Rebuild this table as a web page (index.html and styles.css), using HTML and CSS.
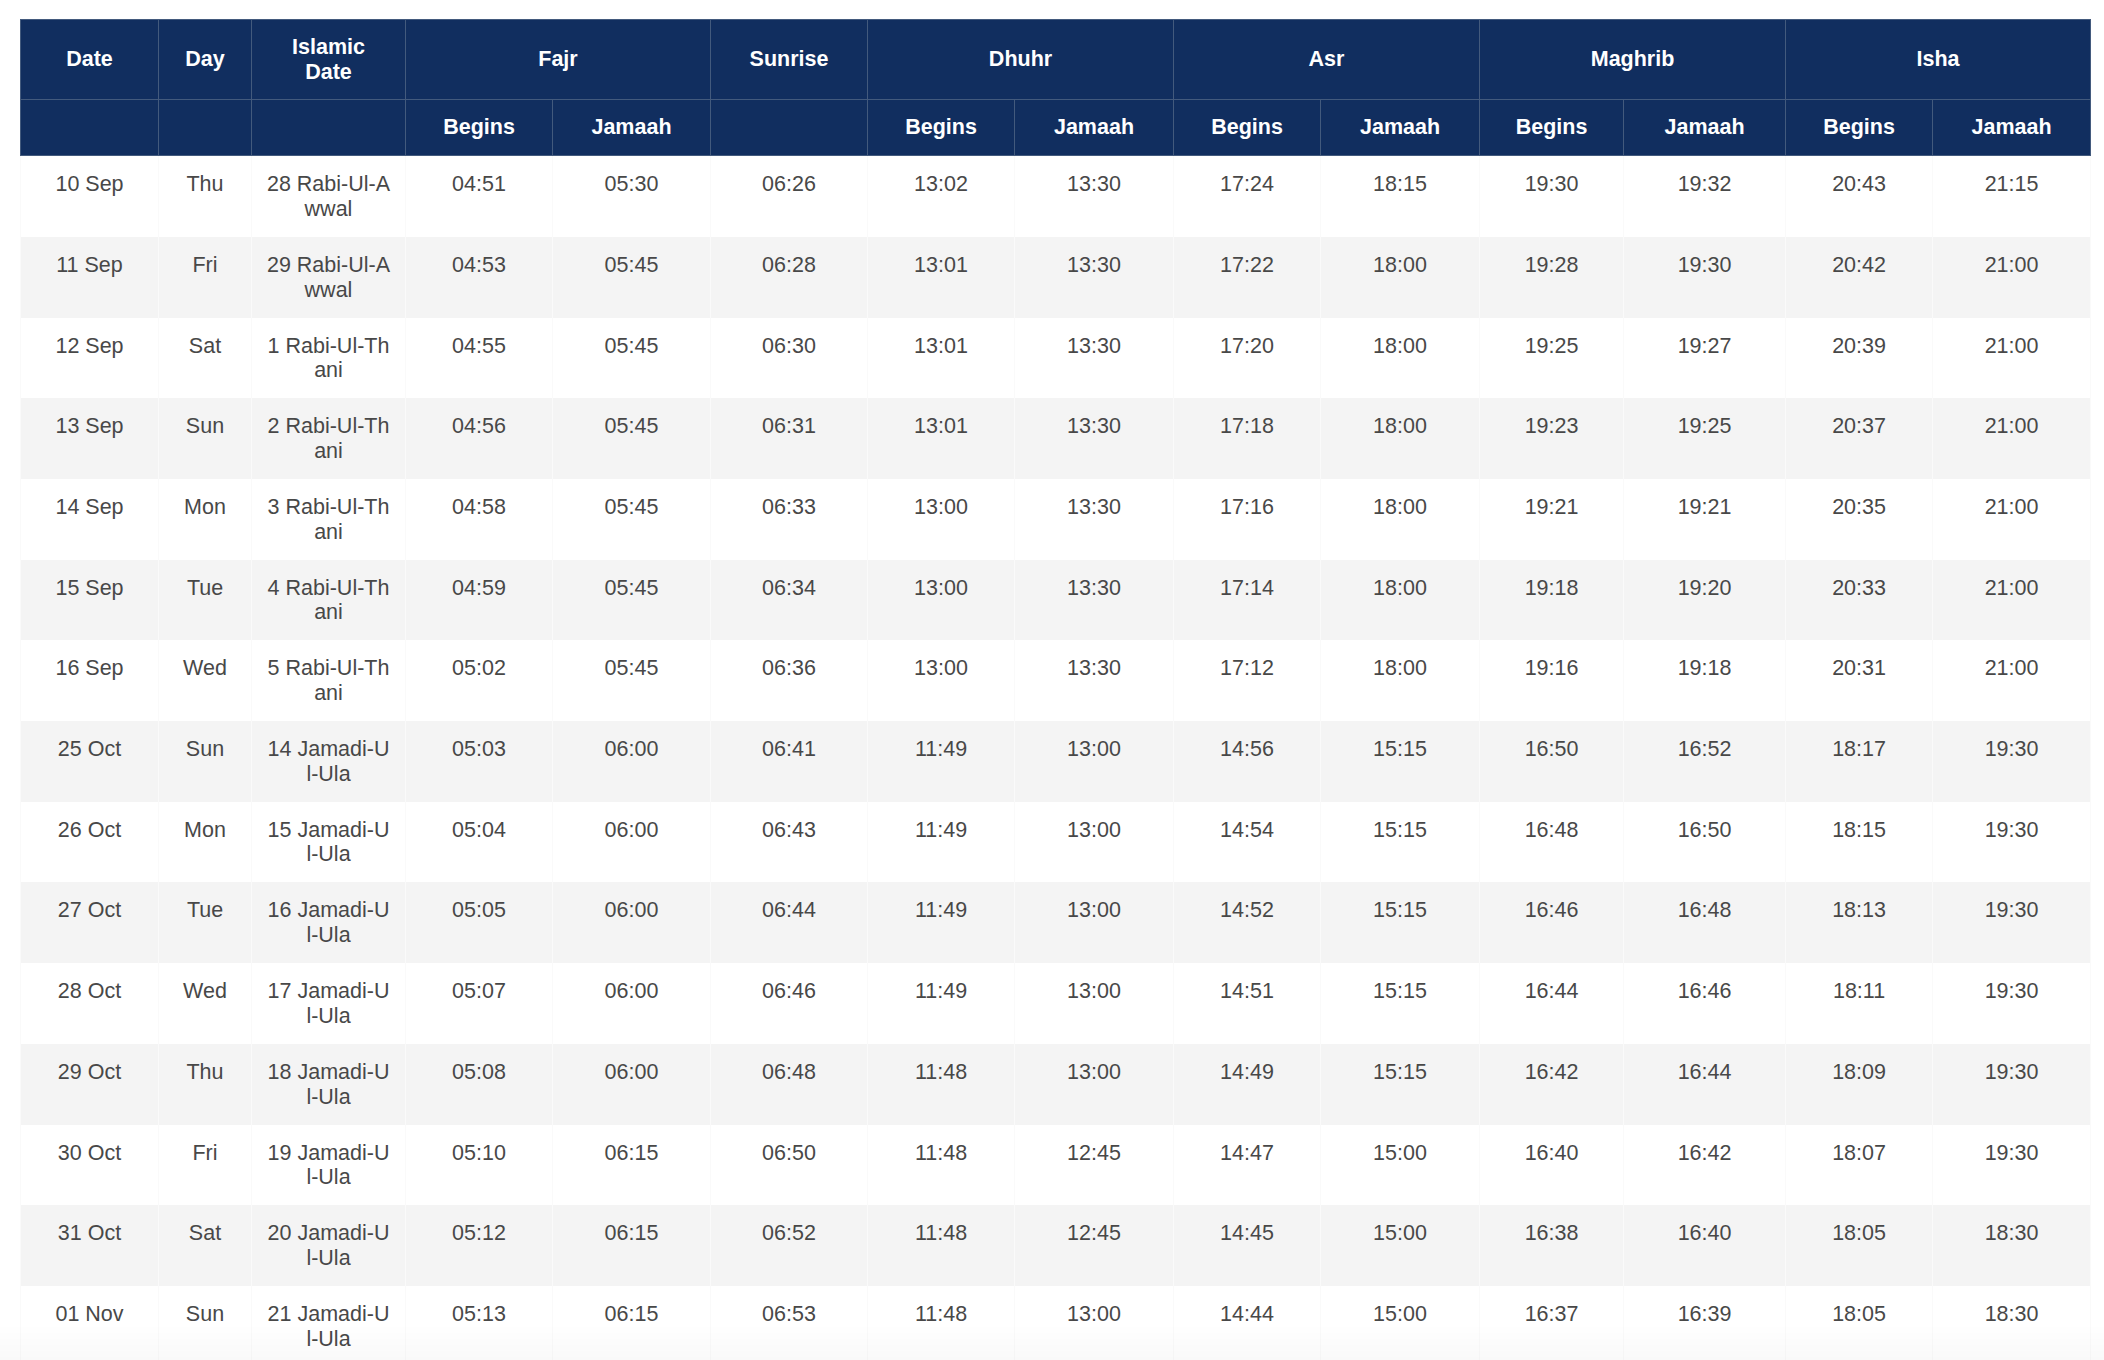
FILE: index.html
```html
<!DOCTYPE html>
<html lang="en">
<head>
<meta charset="utf-8">
<title>Prayer Timetable</title>
<link rel="stylesheet" href="styles.css">
</head>
<body>
<table class="timetable">
  <colgroup>
    <col class="c-date"><col class="c-day"><col class="c-islamic">
    <col class="c-fb"><col class="c-fj"><col class="c-sun">
    <col class="c-db"><col class="c-dj"><col class="c-ab"><col class="c-aj">
    <col class="c-mb"><col class="c-mj"><col class="c-ib"><col class="c-ij">
  </colgroup>
  <thead>
    <tr class="head-main">
      <th>Date</th><th>Day</th><th>Islamic<br>Date</th>
      <th colspan="2">Fajr</th><th>Sunrise</th><th colspan="2">Dhuhr</th>
      <th colspan="2">Asr</th><th colspan="2">Maghrib</th><th colspan="2">Isha</th>
    </tr>
    <tr class="head-sub">
      <th></th><th></th><th></th>
      <th>Begins</th><th>Jamaah</th><th></th>
      <th>Begins</th><th>Jamaah</th><th>Begins</th><th>Jamaah</th>
      <th>Begins</th><th>Jamaah</th><th>Begins</th><th>Jamaah</th>
    </tr>
  </thead>
  <tbody>
    <tr><td>10 Sep</td><td>Thu</td><td class="islamic">28 Rabi-Ul-Awwal</td><td>04:51</td><td>05:30</td><td>06:26</td><td>13:02</td><td>13:30</td><td>17:24</td><td>18:15</td><td>19:30</td><td>19:32</td><td>20:43</td><td>21:15</td></tr>
    <tr><td>11 Sep</td><td>Fri</td><td class="islamic">29 Rabi-Ul-Awwal</td><td>04:53</td><td>05:45</td><td>06:28</td><td>13:01</td><td>13:30</td><td>17:22</td><td>18:00</td><td>19:28</td><td>19:30</td><td>20:42</td><td>21:00</td></tr>
    <tr><td>12 Sep</td><td>Sat</td><td class="islamic">1 Rabi-Ul-Thani</td><td>04:55</td><td>05:45</td><td>06:30</td><td>13:01</td><td>13:30</td><td>17:20</td><td>18:00</td><td>19:25</td><td>19:27</td><td>20:39</td><td>21:00</td></tr>
    <tr><td>13 Sep</td><td>Sun</td><td class="islamic">2 Rabi-Ul-Thani</td><td>04:56</td><td>05:45</td><td>06:31</td><td>13:01</td><td>13:30</td><td>17:18</td><td>18:00</td><td>19:23</td><td>19:25</td><td>20:37</td><td>21:00</td></tr>
    <tr><td>14 Sep</td><td>Mon</td><td class="islamic">3 Rabi-Ul-Thani</td><td>04:58</td><td>05:45</td><td>06:33</td><td>13:00</td><td>13:30</td><td>17:16</td><td>18:00</td><td>19:21</td><td>19:21</td><td>20:35</td><td>21:00</td></tr>
    <tr><td>15 Sep</td><td>Tue</td><td class="islamic">4 Rabi-Ul-Thani</td><td>04:59</td><td>05:45</td><td>06:34</td><td>13:00</td><td>13:30</td><td>17:14</td><td>18:00</td><td>19:18</td><td>19:20</td><td>20:33</td><td>21:00</td></tr>
    <tr><td>16 Sep</td><td>Wed</td><td class="islamic">5 Rabi-Ul-Thani</td><td>05:02</td><td>05:45</td><td>06:36</td><td>13:00</td><td>13:30</td><td>17:12</td><td>18:00</td><td>19:16</td><td>19:18</td><td>20:31</td><td>21:00</td></tr>
    <tr><td>25 Oct</td><td>Sun</td><td class="islamic">14 Jamadi-Ul-Ula</td><td>05:03</td><td>06:00</td><td>06:41</td><td>11:49</td><td>13:00</td><td>14:56</td><td>15:15</td><td>16:50</td><td>16:52</td><td>18:17</td><td>19:30</td></tr>
    <tr><td>26 Oct</td><td>Mon</td><td class="islamic">15 Jamadi-Ul-Ula</td><td>05:04</td><td>06:00</td><td>06:43</td><td>11:49</td><td>13:00</td><td>14:54</td><td>15:15</td><td>16:48</td><td>16:50</td><td>18:15</td><td>19:30</td></tr>
    <tr><td>27 Oct</td><td>Tue</td><td class="islamic">16 Jamadi-Ul-Ula</td><td>05:05</td><td>06:00</td><td>06:44</td><td>11:49</td><td>13:00</td><td>14:52</td><td>15:15</td><td>16:46</td><td>16:48</td><td>18:13</td><td>19:30</td></tr>
    <tr><td>28 Oct</td><td>Wed</td><td class="islamic">17 Jamadi-Ul-Ula</td><td>05:07</td><td>06:00</td><td>06:46</td><td>11:49</td><td>13:00</td><td>14:51</td><td>15:15</td><td>16:44</td><td>16:46</td><td>18:11</td><td>19:30</td></tr>
    <tr><td>29 Oct</td><td>Thu</td><td class="islamic">18 Jamadi-Ul-Ula</td><td>05:08</td><td>06:00</td><td>06:48</td><td>11:48</td><td>13:00</td><td>14:49</td><td>15:15</td><td>16:42</td><td>16:44</td><td>18:09</td><td>19:30</td></tr>
    <tr><td>30 Oct</td><td>Fri</td><td class="islamic">19 Jamadi-Ul-Ula</td><td>05:10</td><td>06:15</td><td>06:50</td><td>11:48</td><td>12:45</td><td>14:47</td><td>15:00</td><td>16:40</td><td>16:42</td><td>18:07</td><td>19:30</td></tr>
    <tr><td>31 Oct</td><td>Sat</td><td class="islamic">20 Jamadi-Ul-Ula</td><td>05:12</td><td>06:15</td><td>06:52</td><td>11:48</td><td>12:45</td><td>14:45</td><td>15:00</td><td>16:38</td><td>16:40</td><td>18:05</td><td>18:30</td></tr>
    <tr><td>01 Nov</td><td>Sun</td><td class="islamic">21 Jamadi-Ul-Ula</td><td>05:13</td><td>06:15</td><td>06:53</td><td>11:48</td><td>13:00</td><td>14:44</td><td>15:00</td><td>16:37</td><td>16:39</td><td>18:05</td><td>18:30</td></tr>
  </tbody>
</table>
<div class="bottom-fade"></div>
</body>
</html>
```

FILE: styles.css
```css
html, body {
  margin: 0;
  padding: 0;
  background: #ffffff;
}

body {
  font-family: "Liberation Sans", Arial, Helvetica, sans-serif;
  font-size: 21.5px;
  color: #484848;
}

.timetable {
  width: 2070px;
  margin: 19px 14px 0 20px;
  border-collapse: collapse;
  table-layout: fixed;
}

.c-date { width: 138px; }
.c-day { width: 93px; }
.c-islamic { width: 154px; }
.c-fb { width: 147px; }
.c-fj { width: 158px; }
.c-sun { width: 157px; }
.c-db { width: 147px; }
.c-dj { width: 159px; }
.c-ab { width: 147px; }
.c-aj { width: 159px; }
.c-mb { width: 144px; }
.c-mj { width: 162px; }
.c-ib { width: 147px; }
.c-ij { width: 158px; }

.timetable th {
  background: #112e5f;
  color: #ffffff;
  font-weight: bold;
  line-height: 24.7px;
  padding: 15px 8px;
  text-align: center;
  vertical-align: middle;
  border: 1px solid #435a7d;
}

.timetable td {
  line-height: 24.7px;
  padding: 16px 14px 15.3px;
  text-align: center;
  vertical-align: top;
  border-left: 1px solid #fafafa;
  border-right: 1px solid #fafafa;
}

.timetable tbody tr:nth-child(even) td {
  background: #f4f4f4;
}

.timetable td.islamic {
  word-break: break-all;
}

.bottom-fade {
  position: fixed;
  left: 0;
  right: 0;
  bottom: 0;
  height: 36px;
  background: linear-gradient(to bottom, rgba(0, 0, 0, 0), rgba(0, 0, 0, 0.025));
  pointer-events: none;
}
```
